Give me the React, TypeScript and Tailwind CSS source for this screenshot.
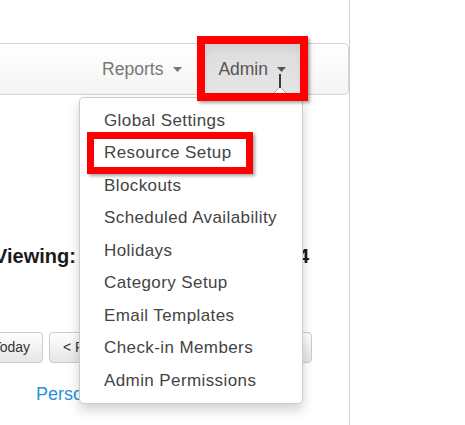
import React from "react";

const menuItems = [
  "Global Settings",
  "Resource Setup",
  "Blockouts",
  "Scheduled Availability",
  "Holidays",
  "Category Setup",
  "Email Templates",
  "Check-in Members",
  "Admin Permissions",
];

function Caret({ className }: { className?: string }) {
  return (
    <svg width="9" height="5" viewBox="0 0 9 5" className={className}>
      <path d="M0 0 L9 0 L4.5 5 Z" fill="currentColor" />
    </svg>
  );
}

export default function App() {
  return (
    <div className="relative h-[425px] w-[465px] overflow-hidden bg-white font-['Liberation_Sans',Arial,sans-serif]">
      {/* PAGE */}
      <div className="h-full w-[350px] border-r border-[#cfcfcf] pt-[43px]">
        {/* NAVBAR */}
        <div className="flex h-[52px] items-stretch justify-end rounded-r-[5px] border border-l-0 border-[#d4d4d4] bg-gradient-to-b from-white to-[#f4f4f4] pr-[47px]">
          <div className="flex items-center gap-[10px] pl-[15px] pr-[22px] text-[17.5px] text-[#777]">
            <span>Reports</span>
            <Caret className="mt-[1px] text-[#777]" />
          </div>
          <div className="flex items-center gap-[9px] bg-gradient-to-b from-[#dcdcdc] to-[#e6e6e6] pl-[14px] pr-[15px] text-[17.5px] text-[#555] shadow-[inset_0_3px_9px_rgba(0,0,0,0.075)]">
            <span>Admin</span>
            <Caret className="mt-[1px] text-[#555]" />
          </div>
        </div>

        {/* CONTENT */}
        <div className="mt-[146px] flex items-center justify-between pr-[40px] text-[20px] font-bold text-[#1a1a1a]">
          <span className="-ml-[6px]">Viewing:</span>
          <span>4</span>
        </div>

        <div className="mt-[61px] flex gap-[6px]">
          <div className="-ml-[20px] flex h-[31px] w-[63px] items-center justify-end rounded-[4px] border border-[#ccc] bg-gradient-to-b from-white to-[#e6e6e6] pr-[12px] text-[14px] text-[#333]">
            Today
          </div>
          <div className="flex h-[31px] w-[263px] items-center rounded-[4px] border border-[#ccc] bg-gradient-to-b from-white to-[#e6e6e6] pl-[13px] text-[14px] text-[#333]">
            &lt; Prev
          </div>
        </div>

        <div className="mt-[18px] pl-[36px] text-[18px] text-[#2a8fd6]">Personal</div>
      </div>

      {/* DROPDOWN MENU */}
      <div className="absolute left-[79px] top-[97px] w-[224px] rounded-[5px] border border-[rgba(0,0,0,0.2)] bg-white py-[6px] shadow-[0_6px_12px_rgba(0,0,0,0.18)]">
        {menuItems.map((item) => (
          <div
            key={item}
            className="flex h-[32.5px] items-center pl-[24px] text-[17px] tracking-[0.4px] text-[#444]"
          >
            {item}
          </div>
        ))}
      </div>
      <svg
        className="absolute left-[270px] top-[86px]"
        width="20"
        height="12"
        viewBox="0 0 20 12"
      >
        <path d="M0 11 L10 1 L20 11 Z" fill="white" stroke="#b0b0b0" strokeWidth="1" />
      </svg>

      {/* ANNOTATION */}
      <div className="absolute left-[279px] top-[74px] h-[14px] w-[2px] bg-[#3a3a3a]" />
      <div className="absolute left-[197px] top-[36px] h-[65px] w-[111px] border-[8px] border-[#ff0000] shadow-[2px_2px_3px_rgba(0,0,0,0.35)]" />
      <div className="absolute left-[87px] top-[132px] h-[42px] w-[166px] border-[7px] border-[#ff0000] shadow-[2px_2px_3px_rgba(0,0,0,0.35)]" />
    </div>
  );
}
